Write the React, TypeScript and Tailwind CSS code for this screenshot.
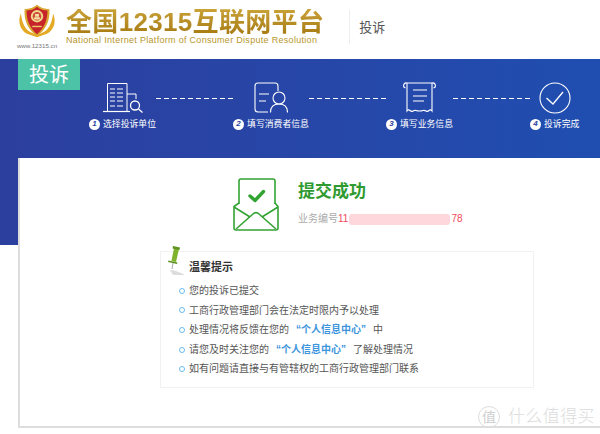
import React from 'react';

const cjk = { fontFamily: '"Liberation Sans", "Noto Sans CJK SC", sans-serif' };

const Emblem = () => (
  <svg width="38" height="36" viewBox="0 0 40 36">
    <path d="M3 10C-1 20 3 29 11 32l9 3 9-3c8-3 12-12 8-22-1 7-3 15-9 19l-8 4-8-4C6 25 4 17 3 10z" fill="#e5aa25" />
    <path d="M7 5c3 1 10-1 13-4 3 3 10 5 13 4 1 12-3 21-13 29C10 26 6 17 7 5z" fill="#d9a62e" />
    <path d="M9 7c4 0 8-1 11-4 3 3 7 4 11 4 0 10-3 18-11 25C12 25 9 17 9 7z" fill="#c7232b" />
    <circle cx="20" cy="13" r="6.500" fill="#f0d98a" />
    <circle cx="20" cy="13" r="4.500" fill="#cf4a3c" />
    <path d="M17 14h6v2.500h-6zM18 10.500h4v3h-4z" fill="#f5e3a4" />
    <rect x="15" y="23" width="10" height="1.500" fill="#eccb6c" />
  </svg>
);

const StepBuilding = () => (
  <svg width="40" height="31" viewBox="0 0 40 31" fill="none" stroke="#fff" strokeWidth="1">
    <path d="M4.500 29V1.500h19.500V29" />
    <path d="M0 29.500h27" strokeWidth="1.200" />
    <path d="M7 7h5M14 7h6M7 11h5M14 11h6M7 15h5M14 15h6M7 19h5M14 19h6M7 24h5M14 24h6" />
    <path d="M24 12h9v5" />
    <circle cx="32" cy="23.500" r="4.500" strokeWidth="1.300" />
    <path d="M35.500 27l4 3.500" strokeWidth="1.300" />
  </svg>
);

const StepPerson = () => (
  <svg width="34" height="31" viewBox="0 0 34 31" fill="none" stroke="#fff" strokeWidth="1.100">
    <path d="M14 30H4a3 3 0 0 1-3-3V4a3 3 0 0 1 3-3h17a3 3 0 0 1 3 3v5" />
    <path d="M5 12h10M5 19h7" />
    <circle cx="25" cy="16" r="6" />
    <path d="M16.500 30.500c0-6 3.500-8.500 8.500-8.500s8.500 2.500 8.500 8.500" />
  </svg>
);

const StepReceipt = () => (
  <svg width="33" height="31" viewBox="0 0 33 31" fill="none" stroke="#fff" strokeWidth="1.100">
    <path d="M4 1h25M4 1a2.500 2.500 0 0 0-1.500 5M29 1a2.500 2.500 0 0 1 1.500 5" />
    <path d="M4 1v28q1.500-2 3-.5t3 .5 3-.5 3.500.5 3.500-.5 3 .5 3-.5 3 .5V1" />
    <path d="M10 8h14M10 14h14M10 19h11" />
  </svg>
);

const StepDone = () => (
  <svg width="32" height="32" viewBox="0 0 32 32" fill="none" stroke="#fff" strokeWidth="1.100">
    <circle cx="16" cy="16" r="15" />
    <path d="M7.500 16l6.500 6 10-12" strokeWidth="1.300" />
  </svg>
);

const Envelope = () => (
  <svg width="48" height="56" viewBox="0 0 48 56" fill="none" stroke="#33a333" strokeWidth="1.600" strokeLinejoin="round">
    <path d="M7 27V4a2 2 0 0 1 2-2h32a2 2 0 0 1 2 2v23" />
    <path d="M7 26l-5 3.500V51a2 2 0 0 0 2 2h40a2 2 0 0 0 2-2V29.500L43 26" />
    <path d="M2 30l16 10M46 30L30 40" />
    <path d="M4 52l17-15a4 4 0 0 1 6 0l17 15" />
    <path d="M18 19l5 4.500 8.500-9" strokeWidth="3.400" strokeLinecap="round" />
  </svg>
);

const Pin = () => (
  <svg width="20" height="31" viewBox="0 0 20 31">
    <path d="M3 25c4 0 10 2 15 5H6z" fill="#ddd" />
    <path d="M5 24l1-6" stroke="#a9a9a9" strokeWidth="1" />
    <path d="M4.500 16L7 3l5 1-3 13z" fill="#7fb32e" />
    <path d="M6 1l7 1.500-.5 2.500-7-1.500zM1.500 15.500l9 2-.5 1.500-9-2z" fill="#5f9420" />
  </svg>
);

const steps = [
  { n: '1', label: '选择投诉单位', icon: <StepBuilding /> },
  { n: '2', label: '填写消费者信息', icon: <StepPerson /> },
  { n: '3', label: '填写业务信息', icon: <StepReceipt /> },
  { n: '4', label: '投诉完成', icon: <StepDone /> },
];

const tips: React.ReactNode[] = [
  '您的投诉已提交',
  '工商行政管理部门会在法定时限内予以处理',
  <>处理情况将反馈在您的<b className="mx-[7px] font-bold text-[#3b94dc]">“个人信息中心”</b>中</>,
  <>请您及时关注您的<b className="mx-[7px] font-bold text-[#3b94dc]">“个人信息中心”</b>了解处理情况</>,
  '如有问题请直接与有管辖权的工商行政管理部门联系',
];

export default function App() {
  return (
    <div style={cjk} className="relative h-[434px] w-[600px] overflow-hidden bg-white">
      <header className="flex h-[59px] items-start">
        <div className="ml-[18px] mt-[3px] flex w-[38px] flex-col items-center">
          <Emblem />
          <span className="mt-[3px] whitespace-nowrap text-[6.200px] leading-[8px] text-[#777]">www.12315.cn</span>
        </div>
        <div className="ml-[10px] mt-[9px] flex flex-col">
          <span className="whitespace-nowrap bg-gradient-to-b from-[#c9a238] to-[#a67a10] bg-clip-text text-[26px] font-bold leading-[26px] tracking-[0.33px] text-transparent">全国12315互联网平台</span>
          <span className="whitespace-nowrap text-[9px] leading-[10px] tracking-[0.3px] text-[#b8962e]">
            National Internet Platform of Consumer Dispute Resolution
          </span>
        </div>
        <div className="ml-[25px] mt-[10px] h-[34px] border-l border-[#eee]" />
        <span className="ml-[9px] mt-[19px] text-[13px] leading-[17px] text-[#555]">投诉</span>
      </header>

      <div className="h-[186px] bg-gradient-to-r from-[#2c3f9f] to-[#1f4eb0]">
        <div className="ml-[18px] flex h-[31px] w-[62px] items-center justify-center bg-[#4cc2a6] text-[20px] text-white">投诉</div>
        <div className="ml-[89px] mt-[-8px] flex items-start">
          {steps.map((s, i) => (
            <React.Fragment key={s.n}>
              <div className="flex flex-col items-center">
                <div className="flex h-[31px] items-center justify-center">{s.icon}</div>
                <div className="mt-[5px] flex items-center gap-[3px] whitespace-nowrap text-[8.850px] leading-[12px] text-white">
                  <span className="flex h-[11px] w-[11px] items-center justify-center rounded-full bg-white text-[8px] font-bold italic text-[#2c3f9f]">{s.n}</span>
                  {s.label}
                </div>
              </div>
              {i < 3 && (
                <div className="mt-[16px] h-px w-[77px] bg-[repeating-linear-gradient(90deg,#fff_0,#fff_5px,transparent_5px,transparent_8px)]" />
              )}
            </React.Fragment>
          ))}
        </div>
      </div>

      <main className="absolute left-[18px] top-[158px] h-[270px] w-[600px] border-b-2 border-l-2 border-[#ddd] bg-white">
        <div className="ml-[212px] mt-[19px] flex items-start">
          <Envelope />
          <div className="ml-[18px] mt-[4px]">
            <div className="text-[17px] font-bold leading-[22px] text-[#2f9a2f]">提交成功</div>
            <div className="mt-[9px] flex items-center text-[10px] leading-[14px]">
              <span className="text-[#aaa]">业务编号</span>
              <span className="text-[#f04a5a]">11</span>
              <span className="mx-[1px] h-[11px] w-[101px] rounded-[3px] bg-[#fdd7dc]" />
              <span className="text-[#f04a5a]">78</span>
            </div>
          </div>
        </div>
        <section className="relative ml-[140px] mt-[18px] h-[137px] w-[374px] border border-[#f1f1f1] pl-[18px] pt-[7px]">
          <div className="absolute left-[6px] top-[-7px]"><Pin /></div>
          <h2 className="ml-[10px] text-[11px] font-bold leading-[16px] text-[#333]">温馨提示</h2>
          <ul className="mt-[6px] flex flex-col text-[10px] leading-[19.600px] text-[#555]">
            {tips.map((t, i) => (
              <li key={i} className="flex items-center whitespace-nowrap">
                <span className="mr-[4px] h-[6px] w-[6px] rounded-full border border-[#69bdf0]" />
                <span>{t}</span>
              </li>
            ))}
          </ul>
        </section>
      </main>

      <div className="absolute bottom-[6px] right-[5px] flex items-center gap-[8px] text-[#dcdcdc]">
        <span className="flex h-[22px] w-[22px] items-center justify-center rounded-full border border-[#ddd] text-[14px] text-[#cfcfcf]">值</span>
        <span className="text-[17px] font-light leading-[20px] tracking-[0.4px]">什么值得买</span>
      </div>
    </div>
  );
}
